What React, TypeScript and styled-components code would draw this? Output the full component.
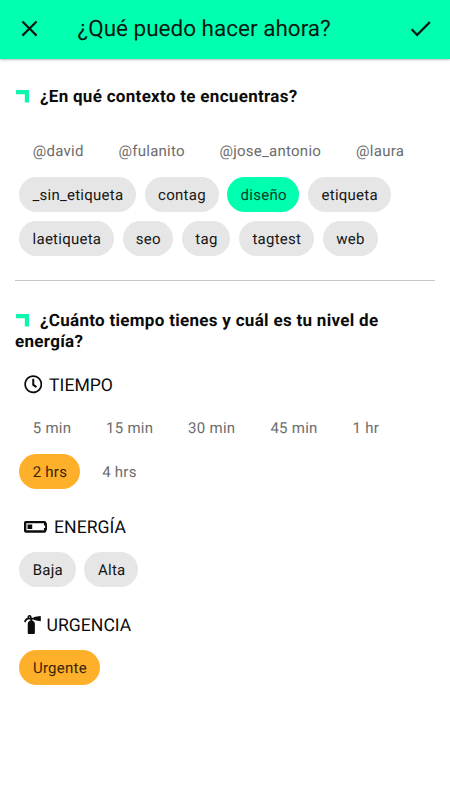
import React from "react";
import styled, { createGlobalStyle } from "styled-components";
import { FaRegClock, FaBatteryQuarter, FaFireExtinguisher } from "react-icons/fa";
import { MdClose, MdCheck } from "react-icons/md";

const GlobalStyle = createGlobalStyle`
  * { box-sizing: border-box; }
  body {
    margin: 0;
    background: #fff;
    color: #0c0c0c;
    font-family: Roboto, "Liberation Sans", sans-serif;
    text-rendering: geometricPrecision;
  }
`;

const Page = styled.div`
  height: 800px;
  overflow: hidden;
`;

const Toolbar = styled.header`
  display: flex;
  align-items: center;
  height: 59px;
  padding: 0 16px 3px;
  background: #00ffae;
  box-shadow: 0 1px 2px rgba(0, 0, 0, 0.28);
`;

const IconButton = styled.button`
  display: flex;
  padding: 0;
  border: 0;
  background: none;
  color: #031a12;
`;

const Title = styled.h1`
  flex: 1;
  margin: 0 0 0 34.5px;
  padding-top: 2px;
  font-size: 22.5px;
  font-weight: 400;
  line-height: 28px;
  color: #031a12;
`;

const Section = styled.section<{ $divided?: boolean }>`
  margin: 0 15px;
  padding-top: ${(p) => (p.$divided ? 28 : 30)}px;
  height: ${(p) => (p.$divided ? "222px" : "auto")};
  border-bottom: ${(p) => (p.$divided ? "1px solid #c8c8c8" : "0")};
`;

const Heading = styled.h2`
  margin: 0;
  font-size: 17px;
  font-weight: 700;
  line-height: 21px;
  letter-spacing: 0.3px;
`;

const Corner = styled.svg`
  width: 14px;
  height: 13px;
  margin-right: 11px;
  vertical-align: -0.5px;
`;

const Chips = styled.div<{ $top: number }>`
  display: flex;
  flex-wrap: wrap;
  gap: 9px 8.8px;
  margin: ${(p) => p.$top}px 0 0 4.3px;
`;

type Tone = "plain" | "gray" | "green" | "orange";
const fills: Record<Tone, string> = {
  plain: "transparent",
  gray: "#e6e6e6",
  green: "#00ffae",
  orange: "#ffb02b",
};
const inks: Record<Tone, string> = {
  plain: "#6c6c6c",
  gray: "#161616",
  green: "#063f2c",
  orange: "#3a2405",
};

const Chip = styled.button<{ $tone: Tone; $width: number }>`
  width: ${(p) => p.$width}px;
  height: 35px;
  padding: 1px 0 0 0.6px;
  border: 0;
  border-radius: 18px;
  background: ${(p) => fills[p.$tone]};
  color: ${(p) => inks[p.$tone]};
  font: 400 15px/34px Roboto, "Liberation Sans", sans-serif;
  letter-spacing: 0.26px;
  white-space: nowrap;
  text-rendering: geometricPrecision;
`;

const GroupTitle = styled.h3<{ $top: number; $gap: number; $left?: number }>`
  display: flex;
  align-items: center;
  gap: ${(p) => p.$gap}px;
  height: 22px;
  margin: ${(p) => p.$top}px 0 0 ${(p) => p.$left ?? 8.6}px;
  font-size: 17.6px;
  font-weight: 400;
  line-height: 22px;

  svg {
    margin-bottom: 3.4px;
  }
`;

type Item = [label: string, width: number, tone: Tone];

const people: Item[] = [
  ["@david", 77.3, "plain"],
  ["@fulanito", 92, "plain"],
  ["@jose_antonio", 127.6, "plain"],
  ["@laura", 74.5, "plain"],
];
const tags: Item[] = [
  ["_sin_etiqueta", 116.7, "gray"],
  ["contag", 73.8, "gray"],
  ["diseño", 72, "green"],
  ["etiqueta", 82.5, "gray"],
  ["laetiqueta", 94.7, "gray"],
  ["seo", 50.4, "gray"],
  ["tag", 48.4, "gray"],
  ["tagtest", 74.8, "gray"],
  ["web", 55, "gray"],
];
const times: Item[] = [
  ["5 min", 64.8, "plain"],
  ["15 min", 73, "plain"],
  ["30 min", 73.5, "plain"],
  ["45 min", 73.5, "plain"],
  ["1 hr", 52.5, "plain"],
  ["2 hrs", 60.7, "orange"],
  ["4 hrs", 60.7, "plain"],
];
const energy: Item[] = [
  ["Baja", 56.4, "gray"],
  ["Alta", 54, "gray"],
];
const urgency: Item[] = [["Urgente", 80.7, "orange"]];

function ChipList({ items, top }: { items: Item[]; top: number }) {
  return (
    <Chips $top={top}>
      {items.map(([label, width, tone]) => (
        <Chip key={label} $width={width} $tone={tone}>
          {label}
        </Chip>
      ))}
    </Chips>
  );
}

function CornerMark() {
  return (
    <Corner viewBox="0 0 14 13" aria-hidden="true">
      <path d="M1 0H14V12.5H9.8V4.3H1.8Q1 4.3 1 3.5Z" fill="#0ff5ae" />
    </Corner>
  );
}

export default function App() {
  return (
    <Page>
      <GlobalStyle />
      <Toolbar>
        <IconButton aria-label="Cerrar">
          <MdClose size={27} />
        </IconButton>
        <Title>¿Qué puedo hacer ahora?</Title>
        <IconButton aria-label="Aceptar">
          <MdCheck size={27} />
        </IconButton>
      </Toolbar>
      <Section $divided>
        <Heading>
          <CornerMark />
          ¿En qué contexto te encuentras?
        </Heading>
        <ChipList items={people} top={25} />
        <ChipList items={tags} top={9} />
      </Section>
      <Section>
        <Heading>
          <CornerMark />
          ¿Cuánto tiempo tienes y cuál es tu nivel de energía?
        </Heading>
        <GroupTitle $top={22} $gap={7}>
          <FaRegClock size={18.5} />
          TIEMPO
        </GroupTitle>
        <ChipList items={times} top={13.4} />
        <GroupTitle $top={28} $gap={7}>
          <FaBatteryQuarter size={23.5} />
          ENERGÍA
        </GroupTitle>
        <ChipList items={energy} top={13} />
        <GroupTitle $top={28} $gap={5} $left={7.6}>
          <FaFireExtinguisher size={19} />
          URGENCIA
        </GroupTitle>
        <ChipList items={urgency} top={13} />
      </Section>
    </Page>
  );
}
